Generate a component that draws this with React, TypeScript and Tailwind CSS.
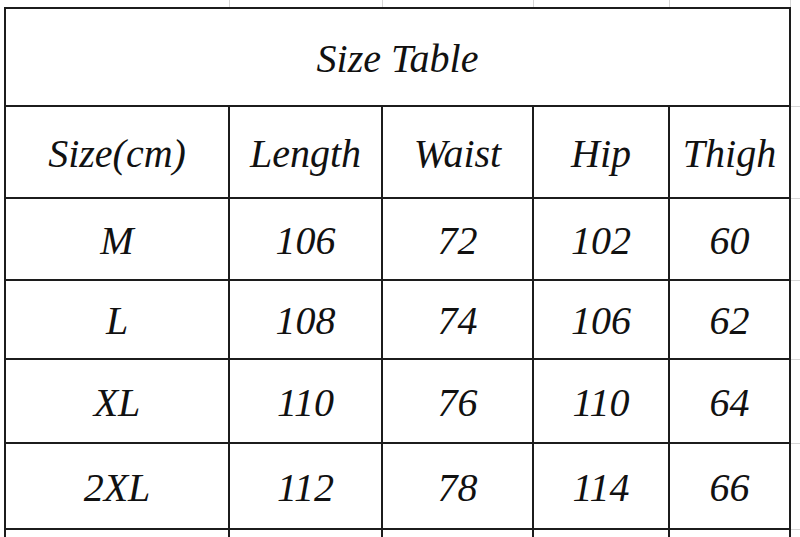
import React from "react"

const cols = ["w-[224px]", "w-[153px]", "w-[151px]", "w-[136px]", "w-[121px]"]

const header = ["Size(cm)", "Length", "Waist", "Hip", "Thigh"]

const rows = [
  { h: "h-[82px]", cells: ["M", "106", "72", "102", "60"] },
  { h: "h-[79px]", cells: ["L", "108", "74", "106", "62"] },
  { h: "h-[84px]", cells: ["XL", "110", "76", "110", "64"] },
  { h: "h-[86px]", cells: ["2XL", "112", "78", "114", "66"] },
  { h: "h-[40px]", cells: ["", "", "", "", ""] },
]

function Gutter() {
  return <div className="w-[9px] self-stretch border-b border-[#d6d6d6]" />
}

function Row({ h, cells }: { h: string; cells: string[] }) {
  return (
    <div className={`flex pl-[4px] ${h}`}>
      <div className="flex border-l-2 border-[#1c1c1c]">
        {cells.map((c, i) => (
          <div
            key={i}
            className={`${cols[i]} flex items-center justify-center border-r-2 border-b-2 border-[#1c1c1c] pt-[3px]`}
          >
            {c}
          </div>
        ))}
      </div>
      <Gutter />
    </div>
  )
}

export default function App() {
  return (
    <div
      className="w-[800px] h-[537px] overflow-hidden bg-white text-[#111] italic text-[40px] leading-none"
      style={{ fontFamily: '"Liberation Serif", "Times New Roman", serif' }}
    >
      {/* spreadsheet gridlines above the table */}
      <div className="flex h-[7px] pl-[6px]">
        {cols.map((w, i) => (
          <div key={i} className={`${w} border-r border-[#d6d6d6]`} />
        ))}
      </div>

      {/* title */}
      <div className="flex h-[100px] pl-[4px]">
        <div className="flex border-l-2 border-t-2 border-[#1c1c1c]">
          <div className="w-[785px] flex items-center justify-center border-r-2 border-b-2 border-[#1c1c1c] pt-[4px]">
            Size Table
          </div>
        </div>
        <Gutter />
      </div>

      <Row h="h-[92px]" cells={header} />
      {rows.map((r, i) => (
        <Row key={i} h={r.h} cells={r.cells} />
      ))}
    </div>
  )
}
